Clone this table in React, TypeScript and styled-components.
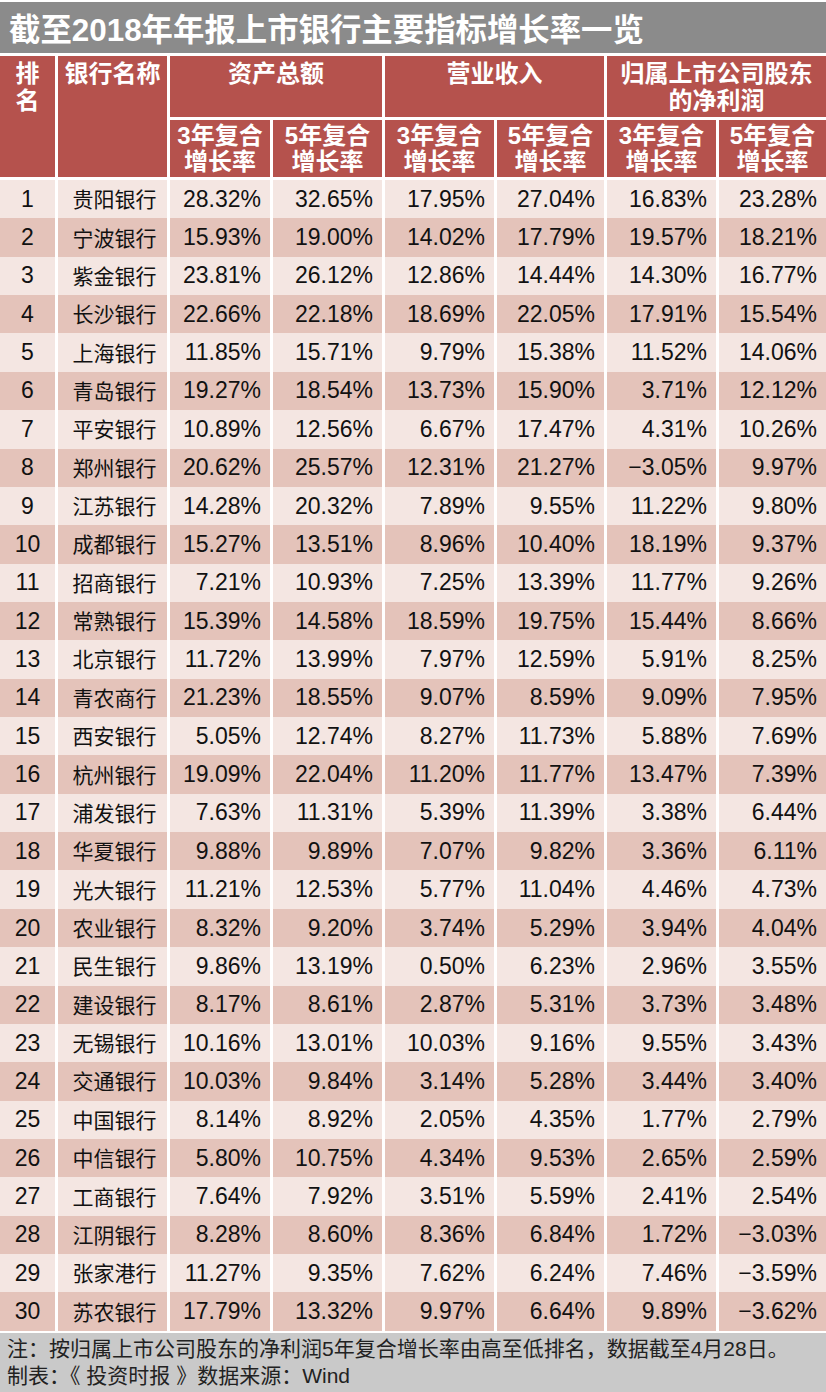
import React from 'react';
import styled, { createGlobalStyle } from 'styled-components';

const GlobalStyle = createGlobalStyle`
  html, body {
    margin: 0;
    padding: 0;
    background: #ffffff;
  }
  body {
    font-family: "Liberation Sans", "Noto Sans CJK SC", sans-serif;
  }
`;

const COLS = '55px 109px 100px 109px 109px 107px 109px 107px';

const Page = styled.div`
  width: 826px;
  height: 1392px;
  display: flex;
  flex-direction: column;
  background: #ffffff;
  overflow: hidden;
`;

const Title = styled.h1`
  margin: 2px 0 0;
  height: 51px;
  display: flex;
  align-items: center;
  padding: 0 0 0 9px;
  background: #8b8b8b;
  color: #ffffff;
  font-family: "Liberation Sans", "Noto Sans CJK SC", sans-serif;
  font-size: 31.4px;
  font-weight: 700;
  letter-spacing: 0;
  white-space: nowrap;
`;

const HeaderGrid = styled.div`
  margin-top: 3px;
  display: grid;
  grid-template-columns: ${COLS};
  grid-template-rows: 61px 57px;
  gap: 3px;
`;

const HeadCell = styled.div<{ $col: string; $row: string; $top?: boolean }>`
  grid-column: ${({ $col }) => $col};
  grid-row: ${({ $row }) => $row};
  background: #b5524d;
  color: #ffffff;
  font-family: "Liberation Sans", "Noto Sans CJK SC", sans-serif;
  font-weight: 700;
  font-size: 24px;
  line-height: 27px;
  text-align: center;
  display: flex;
  flex-direction: column;
  align-items: center;
  justify-content: ${({ $top }) => ($top ? 'flex-start' : 'center')};
  padding-top: ${({ $top }) => ($top ? '4px' : '0')};
  box-sizing: border-box;
`;

const SubHead = styled.span`
  line-height: 26px;
`;

const Body = styled.div`
  margin-top: 3px;
  display: flex;
  flex-direction: column;
`;

const Row = styled.div<{ $dark: boolean }>`
  display: grid;
  grid-template-columns: ${COLS};
  column-gap: 3px;
  height: 38.37px;
  & > div {
    background: ${({ $dark }) => ($dark ? '#e4c3ba' : '#f4e6e2')};
  }
`;

const Cell = styled.div<{ $align: 'center' | 'right' }>`
  display: flex;
  align-items: center;
  justify-content: ${({ $align }) => ($align === 'right' ? 'flex-end' : 'center')};
  padding-right: ${({ $align }) => ($align === 'right' ? '9px' : '0')};
  color: #111111;
  font-size: 23px;
  white-space: nowrap;
`;

const NameCell = styled(Cell)`
  font-size: 21px;
  padding-left: 4px;
  padding-bottom: 2px;
`;

const Footer = styled.div`
  margin-top: 2px;
  flex: 1;
  background: #c9c9c9;
  color: #222222;
  font-size: 21px;
  line-height: 27px;
  padding: 2px 0 0 7px;
  white-space: nowrap;
`;

type Bank = [number, string, string, string, string, string, string, string];

const rows: Bank[] = [
  [1, '贵阳银行', '28.32%', '32.65%', '17.95%', '27.04%', '16.83%', '23.28%'],
  [2, '宁波银行', '15.93%', '19.00%', '14.02%', '17.79%', '19.57%', '18.21%'],
  [3, '紫金银行', '23.81%', '26.12%', '12.86%', '14.44%', '14.30%', '16.77%'],
  [4, '长沙银行', '22.66%', '22.18%', '18.69%', '22.05%', '17.91%', '15.54%'],
  [5, '上海银行', '11.85%', '15.71%', '9.79%', '15.38%', '11.52%', '14.06%'],
  [6, '青岛银行', '19.27%', '18.54%', '13.73%', '15.90%', '3.71%', '12.12%'],
  [7, '平安银行', '10.89%', '12.56%', '6.67%', '17.47%', '4.31%', '10.26%'],
  [8, '郑州银行', '20.62%', '25.57%', '12.31%', '21.27%', '−3.05%', '9.97%'],
  [9, '江苏银行', '14.28%', '20.32%', '7.89%', '9.55%', '11.22%', '9.80%'],
  [10, '成都银行', '15.27%', '13.51%', '8.96%', '10.40%', '18.19%', '9.37%'],
  [11, '招商银行', '7.21%', '10.93%', '7.25%', '13.39%', '11.77%', '9.26%'],
  [12, '常熟银行', '15.39%', '14.58%', '18.59%', '19.75%', '15.44%', '8.66%'],
  [13, '北京银行', '11.72%', '13.99%', '7.97%', '12.59%', '5.91%', '8.25%'],
  [14, '青农商行', '21.23%', '18.55%', '9.07%', '8.59%', '9.09%', '7.95%'],
  [15, '西安银行', '5.05%', '12.74%', '8.27%', '11.73%', '5.88%', '7.69%'],
  [16, '杭州银行', '19.09%', '22.04%', '11.20%', '11.77%', '13.47%', '7.39%'],
  [17, '浦发银行', '7.63%', '11.31%', '5.39%', '11.39%', '3.38%', '6.44%'],
  [18, '华夏银行', '9.88%', '9.89%', '7.07%', '9.82%', '3.36%', '6.11%'],
  [19, '光大银行', '11.21%', '12.53%', '5.77%', '11.04%', '4.46%', '4.73%'],
  [20, '农业银行', '8.32%', '9.20%', '3.74%', '5.29%', '3.94%', '4.04%'],
  [21, '民生银行', '9.86%', '13.19%', '0.50%', '6.23%', '2.96%', '3.55%'],
  [22, '建设银行', '8.17%', '8.61%', '2.87%', '5.31%', '3.73%', '3.48%'],
  [23, '无锡银行', '10.16%', '13.01%', '10.03%', '9.16%', '9.55%', '3.43%'],
  [24, '交通银行', '10.03%', '9.84%', '3.14%', '5.28%', '3.44%', '3.40%'],
  [25, '中国银行', '8.14%', '8.92%', '2.05%', '4.35%', '1.77%', '2.79%'],
  [26, '中信银行', '5.80%', '10.75%', '4.34%', '9.53%', '2.65%', '2.59%'],
  [27, '工商银行', '7.64%', '7.92%', '3.51%', '5.59%', '2.41%', '2.54%'],
  [28, '江阴银行', '8.28%', '8.60%', '8.36%', '6.84%', '1.72%', '−3.03%'],
  [29, '张家港行', '11.27%', '9.35%', '7.62%', '6.24%', '7.46%', '−3.59%'],
  [30, '苏农银行', '17.79%', '13.32%', '9.97%', '6.64%', '9.89%', '−3.62%'],
];

const subCols = ['3', '4', '5', '6', '7', '8'];

export default function App() {
  return (
    <Page>
      <GlobalStyle />
      <Title>截至2018年年报上市银行主要指标增长率一览</Title>
      <HeaderGrid>
        <HeadCell $col="1" $row="1 / span 2" $top>
          <span>排</span>
          <span>名</span>
        </HeadCell>
        <HeadCell $col="2" $row="1 / span 2" $top>银行名称</HeadCell>
        <HeadCell $col="3 / span 2" $row="1" $top>资产总额</HeadCell>
        <HeadCell $col="5 / span 2" $row="1" $top>营业收入</HeadCell>
        <HeadCell $col="7 / span 2" $row="1" $top>
          <span>归属上市公司股东</span>
          <span>的净利润</span>
        </HeadCell>
        {subCols.map((c, i) => (
          <HeadCell key={c} $col={c} $row="2">
            <SubHead>{i % 2 === 0 ? '3' : '5'}年复合</SubHead>
            <SubHead>增长率</SubHead>
          </HeadCell>
        ))}
      </HeaderGrid>
      <Body>
        {rows.map((r, i) => (
          <Row key={r[0]} $dark={i % 2 === 1}>
            <Cell $align="center">{r[0]}</Cell>
            <NameCell $align="center">{r[1]}</NameCell>
            {r.slice(2).map((v, j) => (
              <Cell key={j} $align="right">{v}</Cell>
            ))}
          </Row>
        ))}
      </Body>
      <Footer>
        <div>注：按归属上市公司股东的净利润5年复合增长率由高至低排名，数据截至4月28日。</div>
        <div>制表：《 投资时报 》数据来源：Wind</div>
      </Footer>
    </Page>
  );
}
